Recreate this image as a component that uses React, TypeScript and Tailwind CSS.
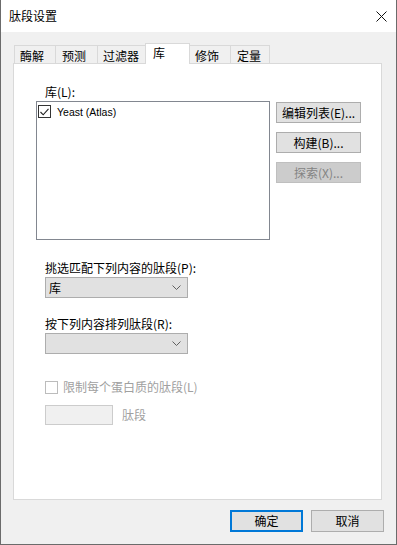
import React from 'react';

const font = { fontFamily: '"Noto Sans CJK SC", "Noto Sans", sans-serif' };

const tabs = [
  { label: '酶解', w: 'w-[41px]', pl: 'pl-[5px]' },
  { label: '预测', w: 'w-[42px]', pl: 'pl-[6px]' },
  { label: '过滤器', w: 'w-[48px]', pl: 'pl-[5px]' },
  { label: '库', w: 'w-[45px]', pl: 'pl-[7px]', active: true },
  { label: '修饰', w: 'w-[40px]', pl: 'pl-[5px]' },
  { label: '定量', w: 'w-[40px]', pl: 'pl-[6px]' },
];

const Chevron = () => (
  <svg width="9" height="5" viewBox="0 0 9 5" className="text-[#606060]">
    <path d="M0.5 0.5 L4.5 4.5 L8.5 0.5" fill="none" stroke="currentColor" strokeWidth="1" />
  </svg>
);

const Select = ({ value }: { value?: string }) => (
  <div className="w-[143px] h-[21px] bg-[#e1e1e1] border border-[#adadad] flex items-center justify-between pl-[3px] pr-[6px]">
    <span>{value}</span>
    <Chevron />
  </div>
);

const SideButton = ({ label, disabled }: { label: string; disabled?: boolean }) => (
  <div
    className={`w-[85px] h-[21px] border flex items-center justify-center ${
      disabled ? 'bg-[#cccccc] border-[#bfbfbf] text-[#838383]' : 'bg-[#e1e1e1] border-[#adadad] text-black'
    }`}
  >
    {label}
  </div>
);

export default function App() {
  return (
    <div
      className="w-[397px] h-[545px] bg-[#f0f0f0] border-x border-b border-[#6b6b6b] flex flex-col text-[12px] leading-[16px] text-black select-none"
      style={font}
    >
      {/* Title bar */}
      <div className="h-[32px] bg-white flex items-center justify-between pl-[8px] pr-[9px]">
        <span className="text-[12px]">肽段设置</span>
        <svg width="11" height="11" viewBox="0 0 11 11">
          <path d="M0.5 0.5 L10.5 10.5 M10.5 0.5 L0.5 10.5" stroke="#111" strokeWidth="1" />
        </svg>
      </div>

      <div className="flex flex-col pl-[12px] pt-[11px]">
        {/* Tabs */}
        <div className="flex items-end h-[20px] pl-[1px]">
          {tabs.map((t, i) =>
            t.active ? (
              <div
                key={t.label}
                className={`${t.w} ${t.pl} h-[21px] -mb-[1px] relative z-10 bg-white border-x border-t border-[#d9d9d9] leading-[18px]`}
              >
                {t.label}
              </div>
            ) : (
              <div
                key={t.label}
                className={`${t.w} ${t.pl} h-[18px] border-t border-[#d9d9d9] ${i === 0 ? 'border-l' : ''} ${
                  tabs[i - 1]?.active ? '' : 'border-l'
                } ${i === tabs.length - 1 ? 'border-r' : ''} leading-[19px]`}
              >
                {t.label}
              </div>
            )
          )}
        </div>

        {/* Panel */}
        <div className="w-[369px] h-[437px] bg-white border border-[#d9d9d9] flex flex-col pl-[31px] pt-[20px]">
          <div className="h-[16px]">库(L):</div>
          <div className="flex -ml-[9px] mt-[1px]">
            <div className="w-[234px] h-[139px] border border-[#828790] bg-white pt-[1px] pl-[1px]">
              <div className="flex items-center h-[15px] mt-[1px]">
                <div className="w-[13px] h-[13px] border border-[#333] flex items-center justify-center">
                  <svg width="9" height="8" viewBox="0 0 9 8">
                    <path d="M0.5 4 L3.2 6.8 L8.5 0.8" fill="none" stroke="#222" strokeWidth="1.1" />
                  </svg>
                </div>
                <span className="ml-[6px] text-[10.5px]" style={{ fontFamily: '"Liberation Sans", sans-serif' }}>
                  Yeast (Atlas)
                </span>
              </div>
            </div>
            <div className="flex flex-col gap-[9px] ml-[6px] mt-[1px]">
              <SideButton label="编辑列表(E)..." />
              <SideButton label="构建(B)..." />
              <SideButton label="探索(X)..." disabled />
            </div>
          </div>

          <div className="h-[16px] mt-[20px]">挑选匹配下列内容的肽段(P):</div>
          <div className="mt-[1px]">
            <Select value="库" />
          </div>

          <div className="h-[16px] mt-[18px]">按下列内容排列肽段(R):</div>
          <div className="mt-[1px]">
            <Select />
          </div>

          <div className="flex items-center mt-[25px] text-[#a0a0a0]">
            <div className="w-[13px] h-[13px] border border-[#bcbcbc] bg-white" />
            <span className="ml-[5px]">限制每个蛋白质的肽段(L)</span>
          </div>

          <div className="flex items-center mt-[10px]">
            <div className="w-[68px] h-[20px] bg-[#f0f0f0] border border-[#cccccc]" />
            <span className="ml-[9px] text-[#a0a0a0]">肽段</span>
          </div>
        </div>

        {/* Footer buttons */}
        <div className="flex justify-end gap-[8px] mt-[10px] w-[371px]">
          <div className="w-[73px] h-[22px] bg-[#e1e1e1] border-2 border-[#0078d7] flex items-center justify-center">
            确定
          </div>
          <div className="w-[73px] h-[22px] bg-[#e1e1e1] border border-[#adadad] flex items-center justify-center">
            取消
          </div>
        </div>
      </div>
    </div>
  );
}
